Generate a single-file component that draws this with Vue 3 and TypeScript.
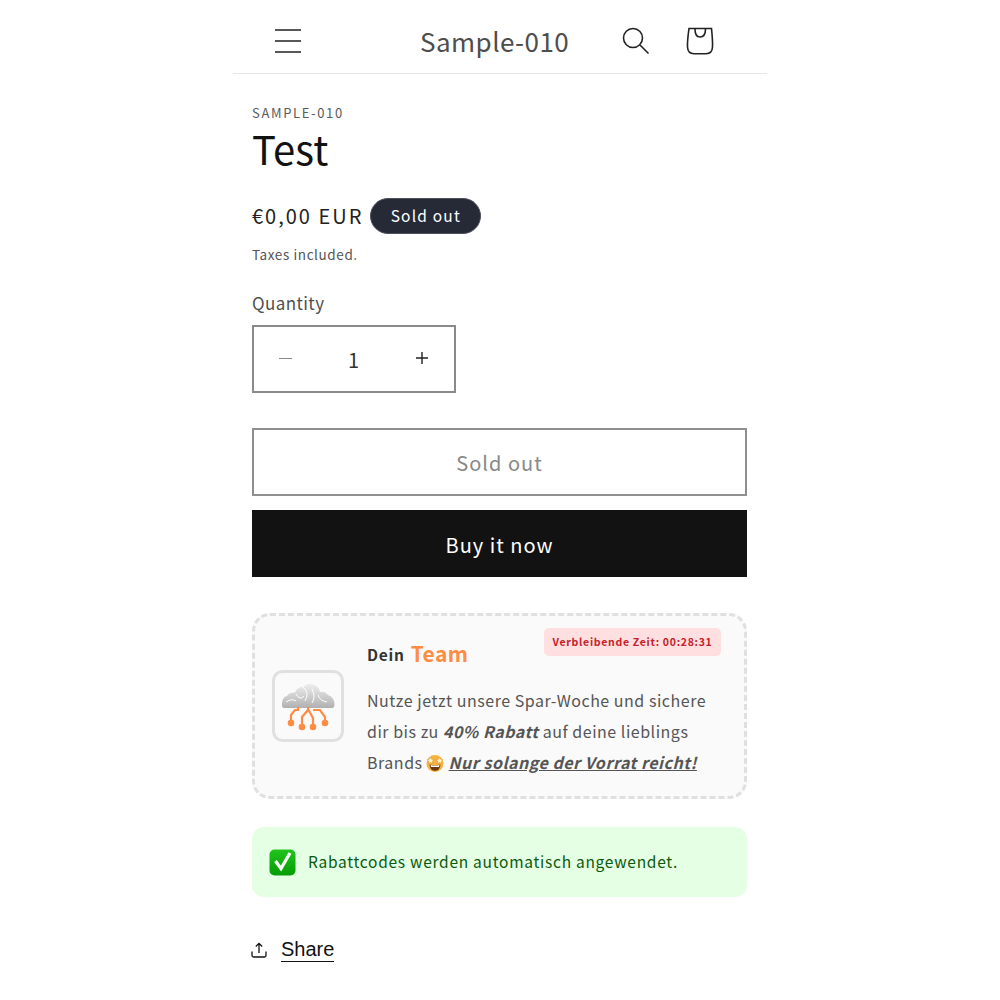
<script setup lang="ts">
const circuits: string[] = [
  'M298 706 V709 H295 L291 714 V722',
  'M308 706 V709 L302 716 V726',
  'M308 708 L313 717 V726',
  'M313 709 H320 L325 716 V722',
]
const dots: number[][] = [[291, 722], [302, 726], [313, 726], [325, 722]]
</script>

<template>
  <div class="page">
    <div class="column">
      <header class="header">
        <button class="icon-btn" aria-label="Menu">
          <svg width="28" height="26" viewBox="0 0 28 26" fill="none" stroke="#222" stroke-width="1.500">
            <path d="M1 2h26M1 13h26M1 24h26" />
          </svg>
        </button>
        <div class="brand">Sample-010</div>
        <div class="header-actions">
          <svg width="28" height="28" viewBox="0 0 28 28" fill="none" stroke="#222" stroke-width="1.600">
            <circle cx="11" cy="11" r="9.500" />
            <path d="M18 18l8.500 8.500" />
          </svg>
          <svg width="28" height="28" viewBox="0 0 28 28" fill="none" stroke="#222" stroke-width="1.600">
            <path d="M3 1.500H25.500Q26.800 14 26.500 20Q26.200 26.500 20 26.800H8Q1.800 26.500 1.500 20Q1.200 14 3 1.500Z" />
            <path d="M9 2Q9 10 14 10Q19.500 10 19.500 2" />
          </svg>
        </div>
      </header>

      <main class="content">
        <div class="vendor">SAMPLE-010</div>
        <h1 class="title">Test</h1>
        <div class="price-row">
          <span class="price">€0,00 EUR</span>
          <span class="badge">Sold out</span>
        </div>
        <div class="tax">Taxes included.</div>
        <div class="qty-label">Quantity</div>
        <div class="qty">
          <span class="minus"></span>
          <span class="qty-value">1</span>
          <span class="plus">
            <svg width="14" height="14" viewBox="0 0 14 14" stroke="#222" stroke-width="1.400"><path d="M1 7h12M7 1v12" /></svg>
          </span>
        </div>
        <button class="btn sold">Sold out</button>
        <button class="btn buy">Buy it now</button>

        <section class="promo">
          <div class="timer">Verbleibende Zeit: 00:28:31</div>
          <div class="logo">
            <svg width="72" height="72" viewBox="272 669 72 72">
              <defs>
                <linearGradient id="cloud" x1="0" y1="0" x2="0" y2="1">
                  <stop offset="0" stop-color="#efefef" />
                  <stop offset="1" stop-color="#b0b0b0" />
                </linearGradient>
              </defs>
              <rect x="273.500" y="670.500" width="69" height="69" rx="9" fill="#fafafa" stroke="#e0e0e0" stroke-width="3" />
              <path d="M284 707Q281.500 707 282 702Q282.500 696 287 695Q289 691 295 691.500Q297 686 303 686Q308 680.500 314 684Q319 685 320 691Q325 690 328 694Q334 696 334.500 703Q334.500 707 332 707Z" fill="url(#cloud)" />
              <path d="M286 701Q292 697 296 700M296 693Q300 700 304 695M303 686Q310 692 305 700M312 688Q316 696 312 702M318 694Q320 700 327 701" fill="none" stroke="#fff" stroke-width="1" />
              <g fill="none" stroke="#ff8c42" stroke-width="2.200">
                <path v-for="d in circuits" :key="d" :d="d" />
              </g>
              <circle v-for="p in dots" :key="p[0]" :cx="p[0]" :cy="p[1]" r="3.300" fill="#ff8c42" />
            </svg>
          </div>
          <div class="promo-body">
            <div class="promo-head">Dein <span class="team">Team</span></div>
            <div class="promo-text">
              <div>Nutze jetzt unsere Spar-Woche und sichere</div>
              <div>dir bis zu <strong><em>40% Rabatt</em></strong> auf deine lieblings</div>
              <div class="last-line">
                <span>Brands</span>
                <svg class="emoji" width="18" height="18" viewBox="0 0 18 18">
                  <circle cx="9" cy="9.500" r="8.500" fill="#f5b43c" />
                  <path d="M3.500 10.500Q9 12 14.500 10.500Q14 16.800 9 16.800Q4 16.800 3.500 10.500Z" fill="#6b3a12" />
                  <path d="M4.500 11Q9 12.200 13.500 11L13 13H5Z" fill="#fff" />
                  <path d="M4.500 3l1.100 2.200 2.400.300-1.700 1.700.400 2.400-2.200-1.100-2.200 1.100.400-2.400L1 5.500l2.400-.300zM13.500 3l1.100 2.200 2.400.300-1.700 1.700.400 2.400-2.200-1.100-2.200 1.100.400-2.400L10 5.500l2.400-.300z" fill="#fdf3d0" stroke="#e58a2a" stroke-width=".500" />
                </svg>
                <strong class="underline"><em>Nur solange der Vorrat reicht!</em></strong>
              </div>
            </div>
          </div>
        </section>

        <section class="notice">
          <svg class="check" width="27" height="27" viewBox="0 0 27 27">
            <defs>
              <linearGradient id="checkbg" x1="0" y1="0" x2="0" y2="1">
                <stop offset="0" stop-color="#22c41e" />
                <stop offset="1" stop-color="#059c05" />
              </linearGradient>
            </defs>
            <rect x="0.500" y="0.500" width="26" height="26" rx="5" fill="url(#checkbg)" />
            <path d="M6.500 12l5.500 7.500L21 4" fill="none" stroke="#fff" stroke-width="3.200" />
          </svg>
          <span class="notice-text">Rabattcodes werden automatisch angewendet.</span>
        </section>

        <div class="share">
          <svg width="16" height="16" viewBox="0 0 16 16" fill="none" stroke="#111" stroke-width="1.300">
            <path d="M8 11V1.500M4.800 4.500L8 1.300l3.200 3.200M1 9.500v4q0 1.500 1.500 1.500h11q1.500 0 1.500-1.500v-4" />
          </svg>
          <span class="share-text">Share</span>
        </div>
      </main>
    </div>
  </div>
</template>

<style scoped>
.page {
  width: 1000px;
  height: 1000px;
  background: #fff;
  display: flex;
  justify-content: center;
  overflow: hidden;
  font-family: "Noto Sans CJK SC", "Open Sans", sans-serif;
  color: #444;
}
.column {
  width: 534px;
}
.header {
  height: 74px;
  box-sizing: border-box;
  border-bottom: 1px solid #e6e6e6;
  display: flex;
  align-items: center;
  padding: 9px 53px 0 41px;
}
.icon-btn {
  border: 0;
  background: none;
  padding: 0;
  display: flex;
  margin-top: -1px;
}
.brand {
  font-size: 26px;
  letter-spacing: 0.450px;
  line-height: 1;
  color: #4d4d4d;
  margin-left: 118px;
  margin-top: -1px;
}
.header-actions {
  margin-left: auto;
  display: flex;
  gap: 36px;
  margin-top: -1px;
}
.content {
  padding: 30px 20px 0 19px;
}
.vendor {
  font-size: 13px;
  line-height: 17px;
  letter-spacing: 1.650px;
  color: #5a5a5a;
}
.title {
  margin: 2px 0 0;
  font-size: 40px;
  line-height: 50px;
  font-weight: 400;
  color: #121212;
  letter-spacing: 0.100px;
}
.price-row {
  display: flex;
  align-items: center;
  gap: 7px;
  margin-top: 25px;
  height: 36px;
}
.price {
  font-size: 20px;
  letter-spacing: 2px;
  color: #222;
  padding-bottom: 2px;
}
.badge {
  background: #252a36;
  border: 1px solid #4a505c;
  color: #fff;
  border-radius: 18px;
  height: 36px;
  width: 111px;
  box-sizing: border-box;
  display: flex;
  align-items: center;
  justify-content: center;
  font-size: 15.500px;
  letter-spacing: 1.200px;
  padding-bottom: 2px;
}
.tax {
  font-size: 13.500px;
  line-height: 20px;
  letter-spacing: 0.600px;
  margin-top: 10px;
  color: #555;
}
.qty-label {
  font-size: 17px;
  line-height: 24px;
  letter-spacing: 0.400px;
  margin-top: 27px;
  color: #4f4f4f;
}
.qty {
  margin-top: 10px;
  width: 204px;
  height: 68px;
  box-sizing: border-box;
  border: 2px solid #8a8a8a;
  display: flex;
  align-items: center;
  position: relative;
}
.minus {
  position: absolute;
  left: 25px;
  top: 31px;
  width: 13px;
  height: 1px;
  background: #888;
}
.qty-value {
  width: 100%;
  text-align: center;
  font-size: 20px;
  color: #333;
  padding-right: 1px;
}
.plus {
  position: absolute;
  right: 25px;
  top: 24px;
  display: flex;
}
.btn {
  display: block;
  width: 495px;
  height: 68px;
  box-sizing: border-box;
  font-family: inherit;
  font-size: 20px;
  letter-spacing: 1px;
}
.sold {
  margin-top: 35px;
  background: #fff;
  border: 2px solid #8f8f8f;
  color: #888;
}
.buy {
  margin-top: 14px;
  background: #121212;
  border: 0;
  color: #fff;
  height: 67px;
  padding-top: 2px;
}
.promo {
  position: relative;
  margin-top: 36px;
  width: 495px;
  height: 186px;
  box-sizing: border-box;
  background: #fafafa;
  border: 3px dashed #e0e0e0;
  border-radius: 18px;
  display: flex;
  align-items: center;
  padding: 0 0 0 17px;
}
.timer {
  position: absolute;
  top: 12px;
  right: 23px;
  height: 28px;
  width: 177px;
  box-sizing: border-box;
  background: #ffdfdf;
  border-radius: 5px;
  color: #c6202a;
  font-size: 10.500px;
  font-weight: 700;
  letter-spacing: 0.700px;
  display: flex;
  align-items: center;
  justify-content: center;
  white-space: nowrap;
  padding-bottom: 2px;
}
.logo {
  width: 72px;
  height: 72px;
  flex: none;
  display: flex;
}
.promo-body {
  margin-left: 23px;
  width: 345px;
  margin-top: 3px;
}
.promo-head {
  font-size: 15.500px;
  font-weight: 700;
  color: #333;
  line-height: 28px;
  letter-spacing: 0.700px;
}
.team {
  font-size: 21px;
  color: #ff8c42;
  letter-spacing: 0.450px;
  margin-left: 2px;
  position: relative;
  top: 1px;
}
.promo-text {
  margin: 17px 0 -1px;
  font-size: 16px;
  line-height: 31px;
  letter-spacing: 0.520px;
  color: #555;
}
.last-line {
  display: flex;
  align-items: center;
}
.underline {
  text-decoration: underline;
  letter-spacing: 0.520px;
}
.emoji {
  margin: 0 5px 0 3px;
  flex: none;
}
.notice {
  margin-top: 28px;
  width: 495px;
  height: 70px;
  box-sizing: border-box;
  background: #e5ffe5;
  border-radius: 12px;
  display: flex;
  align-items: center;
  padding-left: 17px;
  font-size: 15.500px;
  letter-spacing: 0.730px;
  color: #0b5a0b;
}
.notice-text {
  padding-bottom: 2px;
}
.check {
  margin-right: 12px;
  flex: none;
}
.share {
  margin-top: 40px;
  display: flex;
  align-items: center;
  gap: 14px;
  margin-left: -1px;
}
.share-text {
  font-family: "Liberation Sans", Arial, sans-serif;
  font-size: 20px;
  line-height: 24px;
  color: #111;
  border-bottom: 1px solid #111;
}
</style>
